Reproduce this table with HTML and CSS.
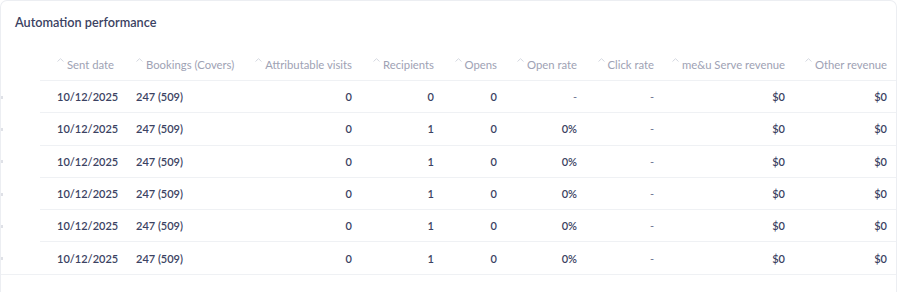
FILE: index.html
```html
<!DOCTYPE html>
<html lang="en">
<head>
<meta charset="utf-8">
<title>Automation performance</title>
<link rel="stylesheet" href="styles.css">
</head>
<body>
<div class="card">
  <h2 class="title">Automation performance</h2>
  <div class="table">
    <div class="row head">
      <div class="cell c0"></div>
      <div class="cell c1 left"><span class="sort"><svg width="7" height="4" viewBox="0 0 7 4"><path d="M0.5 3.5 L3.5 0.7 L6.5 3.5" fill="none" stroke="#d5d8e0" stroke-width="1"/></svg></span>Sent date</div>
      <div class="cell c2 left"><span class="sort"><svg width="7" height="4" viewBox="0 0 7 4"><path d="M0.5 3.5 L3.5 0.7 L6.5 3.5" fill="none" stroke="#d5d8e0" stroke-width="1"/></svg></span>Bookings (Covers)</div>
      <div class="cell c3"><span class="sort"><svg width="7" height="4" viewBox="0 0 7 4"><path d="M0.5 3.5 L3.5 0.7 L6.5 3.5" fill="none" stroke="#d5d8e0" stroke-width="1"/></svg></span>Attributable visits</div>
      <div class="cell c4"><span class="sort"><svg width="7" height="4" viewBox="0 0 7 4"><path d="M0.5 3.5 L3.5 0.7 L6.5 3.5" fill="none" stroke="#d5d8e0" stroke-width="1"/></svg></span>Recipients</div>
      <div class="cell c5"><span class="sort"><svg width="7" height="4" viewBox="0 0 7 4"><path d="M0.5 3.5 L3.5 0.7 L6.5 3.5" fill="none" stroke="#d5d8e0" stroke-width="1"/></svg></span>Opens</div>
      <div class="cell c6"><span class="sort"><svg width="7" height="4" viewBox="0 0 7 4"><path d="M0.5 3.5 L3.5 0.7 L6.5 3.5" fill="none" stroke="#d5d8e0" stroke-width="1"/></svg></span>Open rate</div>
      <div class="cell c7"><span class="sort"><svg width="7" height="4" viewBox="0 0 7 4"><path d="M0.5 3.5 L3.5 0.7 L6.5 3.5" fill="none" stroke="#d5d8e0" stroke-width="1"/></svg></span>Click rate</div>
      <div class="cell c8"><span class="sort"><svg width="7" height="4" viewBox="0 0 7 4"><path d="M0.5 3.5 L3.5 0.7 L6.5 3.5" fill="none" stroke="#d5d8e0" stroke-width="1"/></svg></span>me&amp;u Serve revenue</div>
      <div class="cell c9"><span class="sort"><svg width="7" height="4" viewBox="0 0 7 4"><path d="M0.5 3.5 L3.5 0.7 L6.5 3.5" fill="none" stroke="#d5d8e0" stroke-width="1"/></svg></span>Other revenue</div>
    </div>

    <div class="row data">
      <div class="cell c0"><span class="stub"></span></div>
      <div class="cell c1 left">10/12/2025</div>
      <div class="cell c2 left">247 (509)</div>
      <div class="cell c3">0</div>
      <div class="cell c4">0</div>
      <div class="cell c5">0</div>
      <div class="cell c6 dash">-</div>
      <div class="cell c7 dash">-</div>
      <div class="cell c8">$0</div>
      <div class="cell c9">$0</div>
    </div>
    <div class="row data">
      <div class="cell c0"><span class="stub"></span></div>
      <div class="cell c1 left">10/12/2025</div>
      <div class="cell c2 left">247 (509)</div>
      <div class="cell c3">0</div>
      <div class="cell c4">1</div>
      <div class="cell c5">0</div>
      <div class="cell c6">0%</div>
      <div class="cell c7 dash">-</div>
      <div class="cell c8">$0</div>
      <div class="cell c9">$0</div>
    </div>
    <div class="row data">
      <div class="cell c0"><span class="stub"></span></div>
      <div class="cell c1 left">10/12/2025</div>
      <div class="cell c2 left">247 (509)</div>
      <div class="cell c3">0</div>
      <div class="cell c4">1</div>
      <div class="cell c5">0</div>
      <div class="cell c6">0%</div>
      <div class="cell c7 dash">-</div>
      <div class="cell c8">$0</div>
      <div class="cell c9">$0</div>
    </div>
    <div class="row data">
      <div class="cell c0"><span class="stub"></span></div>
      <div class="cell c1 left">10/12/2025</div>
      <div class="cell c2 left">247 (509)</div>
      <div class="cell c3">0</div>
      <div class="cell c4">1</div>
      <div class="cell c5">0</div>
      <div class="cell c6">0%</div>
      <div class="cell c7 dash">-</div>
      <div class="cell c8">$0</div>
      <div class="cell c9">$0</div>
    </div>
    <div class="row data">
      <div class="cell c0"><span class="stub"></span></div>
      <div class="cell c1 left">10/12/2025</div>
      <div class="cell c2 left">247 (509)</div>
      <div class="cell c3">0</div>
      <div class="cell c4">1</div>
      <div class="cell c5">0</div>
      <div class="cell c6">0%</div>
      <div class="cell c7 dash">-</div>
      <div class="cell c8">$0</div>
      <div class="cell c9">$0</div>
    </div>
    <div class="row data last">
      <div class="cell c0"><span class="stub"></span></div>
      <div class="cell c1 left">10/12/2025</div>
      <div class="cell c2 left">247 (509)</div>
      <div class="cell c3">0</div>
      <div class="cell c4">1</div>
      <div class="cell c5">0</div>
      <div class="cell c6">0%</div>
      <div class="cell c7 dash">-</div>
      <div class="cell c8">$0</div>
      <div class="cell c9">$0</div>
    </div>
  </div>
</div>
</body>
</html>
```

FILE: styles.css
```css
* { box-sizing: border-box; }

html, body {
  margin: 0;
  padding: 0;
  background: #ffffff;
}

body {
  font-family: Lato, "Open Sans", "Liberation Sans", sans-serif;
  color: #3b4262;
}

.card {
  width: 897px;
  height: 292px;
  border: 1px solid #eceef2;
  border-bottom: 0;
  border-radius: 7px 7px 0 0;
  padding-top: 13px;
  background: #fff;
}

.title {
  margin: 0 0 20px 14px;
  font-size: 12.7px;
  line-height: 16px;
  font-weight: 600;
  color: #3b4262;
}

.row {
  display: grid;
  grid-template-columns: 39px 86px 119px 117px 82px 63px 80px 77px 131px 1fr;
}

.cell {
  display: flex;
  align-items: center;
  justify-content: flex-end;
  white-space: nowrap;
  font-size: 11px;
  border-bottom: 1px solid #eff1f4;
  padding: 0 10px;
}

.cell.left { justify-content: flex-start; }
.c1 { padding-left: 17px; }
.c9 { padding-right: 9px; }

.c0 {
  border-bottom-color: transparent;
  justify-content: flex-start;
  padding: 0;
}

.row.last .c0 { border-bottom-color: #eff1f4; }

.head .cell {
  height: 31px;
  font-size: 11.3px;
  color: #9ea2b4;
  font-weight: 400;
  padding-bottom: 1px;
}

.sort {
  display: inline-flex;
  align-self: flex-start;
  margin-top: 8px;
  margin-right: 3px;
}

.sort svg { display: block; }

.data .cell {
  height: 32.3px;
  font-weight: 600;
  color: #3b4262;
}

.data .cell.dash {
  font-weight: 400;
  color: #6b7190;
}

.stub {
  display: block;
  width: 2px;
  height: 3px;
  background: #dfe1e7;
  margin-top: 1px;
}
```
